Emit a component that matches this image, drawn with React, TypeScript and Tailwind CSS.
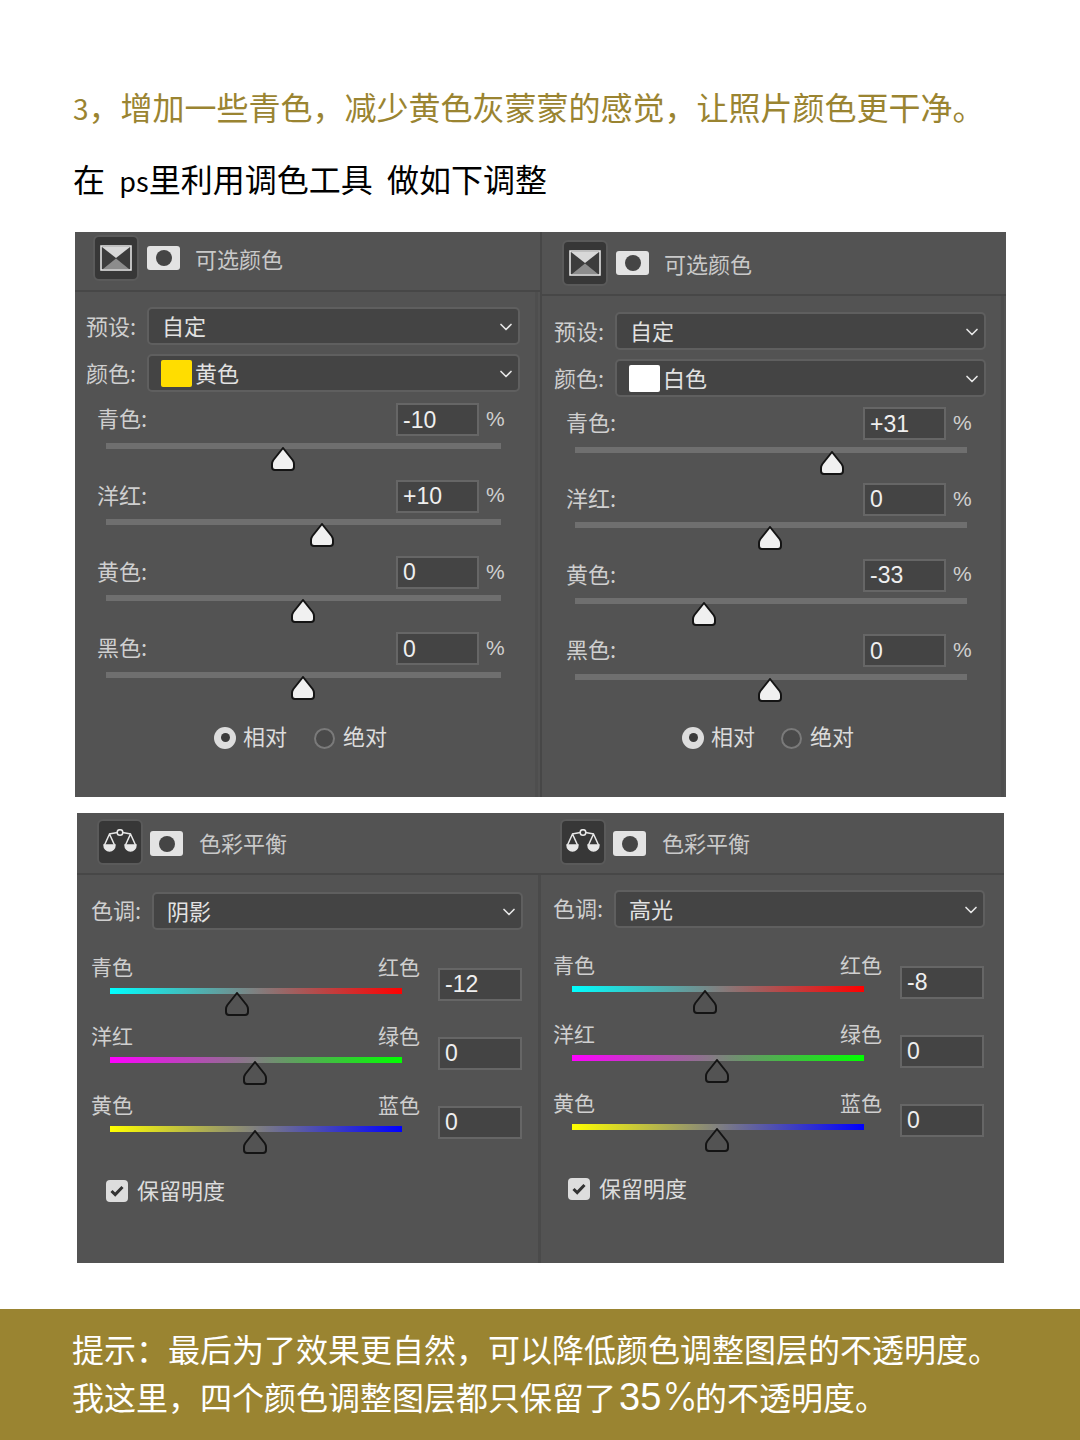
import { ChevronDown } from 'lucide-react';

const cjk = "font-['Noto_Sans_CJK_SC',sans-serif]";

function MaskIcon({ className }: { className: string }) {
    return (
        <div className={`rounded-[3px] bg-[#e3e3e3] flex items-center justify-center ${className}`}>
            <div className="w-[16px] h-[16px] rounded-full bg-[#454545]" />
        </div>
    );
}

function SelectiveIcon() {
    return (
        <div className="w-[46px] h-[46px] rounded-[6px] bg-[#373737] border-2 border-[#5a5a5a] flex items-center justify-center">
            <svg width="32" height="26" viewBox="0 0 32 26">
                <rect x="1" y="1" width="30" height="24" fill="#3c3c3c" stroke="#ececec" strokeWidth="1.5" />
                <path d="M2 2 H30 L16 13 Z" fill="#d8d8d8" />
                <path d="M3 24 L16 13.5 L29 24 Z" fill="#8c8c8c" />
            </svg>
        </div>
    );
}

function BalanceIcon() {
    return (
        <div className="w-[46px] h-[46px] rounded-[6px] bg-[#373737] border-2 border-[#5a5a5a] flex items-center justify-center">
            <svg width="34" height="26" viewBox="0 0 34 26" fill="none" stroke="#e8e8e8" strokeWidth="1.5">
                <circle cx="17" cy="3.5" r="2.8" />
                <path d="M14.5 3.5 L6 5 M19.5 3.5 L28 5" />
                <path d="M6.5 5 L1.5 16 M6.5 5 L11.5 16 M27.5 5 L22.5 16 M27.5 5 L32.5 16" />
                <path d="M1 16 H12 A5.5 6 0 0 1 1 16 Z" fill="#e8e8e8" />
                <path d="M22 16 H33 A5.5 6 0 0 1 22 16 Z" fill="#e8e8e8" />
            </svg>
        </div>
    );
}

function Thumb({ x, solid }: { x: number; solid?: boolean }) {
    return (
        <svg
            className="absolute top-[4px]"
            style={{ left: x - 12 }}
            width="24"
            height="24"
            viewBox="0 0 24 24"
            fill={solid ? '#f0f0f0' : 'none'}
            stroke="#141414"
            strokeWidth="2"
        >
            <path d="M12 1 L21.6 13 Q23 15 23 17 V20 Q23 23 20 23 H4 Q1 23 1 20 V17 Q1 15 2.4 13 Z" strokeLinejoin="round" />
        </svg>
    );
}

function Select({ className, swatch, text }: { className: string; swatch?: string; text: string }) {
    return (
        <div className={`h-[38px] rounded-[5px] bg-[#444444] border-2 border-[#5f5f5f] flex items-center pr-[2px] ${className}`}>
            {swatch ? (
                <div className={`ml-[12px] mr-[3px] w-[31px] h-[27px] rounded-[2px] ${swatch}`} />
            ) : (
                <div className="w-[13px]" />
            )}
            <span className="flex-1 pb-[3px] text-[22px] leading-none text-[#e2e2e2]">{text}</span>
            <ChevronDown size={20} strokeWidth={2} color="#e6e6e6" className="mt-[1px]" />
        </div>
    );
}

function NumberBox({ value, className }: { value: string; className: string }) {
    return (
        <div className={`h-[33px] bg-[#444444] border-2 border-[#666666] flex items-center pl-[5px] font-['Liberation_Sans',sans-serif] text-[23px] text-[#efefef] ${className}`}>
            {value}
        </div>
    );
}

interface SelectiveProps {
    width: string;
    headerPad: string;
    selectPad: string;
    selectWidth: string;
    labelPad: string;
    rowHeight: string;
    rowsTop: string;
    trackClass: string;
    numberWidth: string;
    radioClass: string;
    gapClass: string;
    swatch: string;
    colorName: string;
    rows: { label: string; value: string; x: number }[];
}

function SelectivePanel(p: SelectiveProps) {
    return (
        <div className={`shrink-0 h-full flex flex-col ${p.width}`}>
            <div className={`flex items-start border-b-2 border-[#474747] shrink-0 ${p.headerPad}`}>
                <SelectiveIcon />
                <MaskIcon className="ml-[8px] mt-[11px] w-[33px] h-[24px]" />
                <span className="ml-[15px] mt-[10px] text-[22px] leading-[26px] text-[#c9c9c9]">可选颜色</span>
            </div>
            <div className="flex-1 mr-[2px] border-r-[3px] border-[#4e4e4e]">
                <div className={p.selectPad}>
                    <div className="flex items-center">
                        <span className="w-[61px] pb-[3px] text-[22px] leading-none text-[#cfcfcf]">预设:</span>
                        <Select className={p.selectWidth} text="自定" />
                    </div>
                    <div className="flex items-center mt-[9px]">
                        <span className="w-[61px] pb-[3px] text-[22px] leading-none text-[#cfcfcf]">颜色:</span>
                        <Select className={p.selectWidth} swatch={p.swatch} text={p.colorName} />
                    </div>
                </div>
                <div className={p.rowsTop}>
                    {p.rows.map((row) => (
                        <div key={row.label} className={p.rowHeight}>
                            <div className="flex items-center">
                                <span className={`w-[321px] pb-[5px] text-[22px] leading-none text-[#cfcfcf] ${p.labelPad}`}>{row.label}</span>
                                <NumberBox value={row.value} className={p.numberWidth} />
                                <span className="ml-[7px] pb-[2px] text-[21px] text-[#cfcfcf] font-['Liberation_Sans',sans-serif]">%</span>
                            </div>
                            <div className={`relative h-[6px] mt-[6px] bg-[#6f6f6f] ${p.trackClass}`}>
                                <Thumb x={row.x} solid />
                            </div>
                        </div>
                    ))}
                </div>
                <div className={`flex items-center h-[24px] ${p.radioClass}`}>
                    <div className="w-[22px] h-[22px] rounded-full bg-[#dddddd] flex items-center justify-center">
                        <div className="w-[9px] h-[9px] rounded-full bg-[#3a3a3a]" />
                    </div>
                    <span className="ml-[7px] pb-[5px] text-[22px] leading-none text-[#dcdcdc]">相对</span>
                    <div className={`w-[21px] h-[21px] mt-[1px] rounded-full bg-[#4a4a4a] border-2 border-[#7a7a7a] ${p.gapClass}`} />
                    <span className="ml-[8px] pb-[5px] text-[22px] leading-none text-[#dcdcdc]">绝对</span>
                </div>
            </div>
        </div>
    );
}

interface BalanceRow {
    left: string;
    right: string;
    value: string;
    x: number;
    gradient: string;
}

function BalancePanel({ width, pad, selectTop, selectText, checkPad, rows }: {
    width: string;
    pad: string;
    selectTop: string;
    selectText: string;
    checkPad: string;
    rows: BalanceRow[];
}) {
    return (
        <div className={`shrink-0 h-full ${width} ${pad}`}>
            <div className={`flex items-center ${selectTop}`}>
                <span className="w-[61px] pb-[5px] text-[22px] leading-none text-[#cfcfcf]">色调:</span>
                <Select className="w-[371px]" text={selectText} />
            </div>
            <div className="mt-[26px]">
                {rows.map((row) => (
                    <div key={row.left} className="flex items-start h-[69px]">
                        <div className="w-[329px]">
                            <div className="flex justify-between h-[24px] text-[21px] leading-[20px] text-[#cfcfcf]">
                                <span>{row.left}</span>
                                <span>{row.right}</span>
                            </div>
                            <div className={`relative ml-[19px] mt-[8px] w-[292px] h-[6px] bg-linear-to-r/srgb ${row.gradient}`}>
                                <Thumb x={row.x} />
                            </div>
                        </div>
                        <NumberBox value={row.value} className="ml-[18px] mt-[12px] w-[84px]" />
                    </div>
                ))}
            </div>
            <div className={`flex items-center h-[24px] mt-[16px] ${checkPad}`}>
                <div className="w-[22px] h-[22px] rounded-[4px] bg-[#dddddd] flex items-center justify-center">
                    <svg width="14" height="12" viewBox="0 0 14 12" fill="none" stroke="#333333" strokeWidth="3">
                        <path d="M1.5 6 L5.2 9.6 L12.5 2" />
                    </svg>
                </div>
                <span className="ml-[9px] pb-[5px] text-[22px] leading-none text-[#dcdcdc]">保留明度</span>
            </div>
        </div>
    );
}

const cyanRed = 'from-[#00ffff] via-[#808080] to-[#ff0000]';
const magentaGreen = 'from-[#ff00ff] via-[#808080] to-[#00ff00]';
const yellowBlue = 'from-[#ffff00] via-[#808080] to-[#0000ff]';

export default function App() {
    return (
        <div className={`w-[1080px] h-[1440px] bg-white flex flex-col ${cjk}`}>
            <div className="pt-[70px] pl-[73px] text-[32px] leading-[72px]">
                <p className="h-[72px] text-[#9a8431] whitespace-nowrap"><span className="text-[28px] leading-none">3</span>，增加一些青色，减少黄色灰蒙蒙的感觉，让照片颜色更干净。</p>
                <p className="h-[72px] text-black whitespace-pre">在  <span className="text-[27px] leading-none">ps</span>里利用调色工具  做如下调整</p>
            </div>

            {/* Selective color */}
            <div className="ml-[75px] mt-[18px] w-[931px] h-[565px] bg-[#535353] flex shrink-0">
                <SelectivePanel
                    width="w-[465px]"
                    headerPad="pt-[3px] pl-[18px] h-[60px]"
                    selectPad="pl-[11px] pt-[15px]"
                    selectWidth="w-[373px]"
                    labelPad="pl-[22px]"
                    rowHeight="h-[76.4px]"
                    rowsTop="mt-[11px]"
                    trackClass="ml-[31px] w-[395px]"
                    numberWidth="w-[83px]"
                    radioClass="ml-[139px] mt-[17px]"
                    gapClass="ml-[27px]"
                    swatch="bg-[#ffdd00]"
                    colorName="黄色"
                    rows={[
                        { label: '青色:', value: '-10', x: 177 },
                        { label: '洋红:', value: '+10', x: 216 },
                        { label: '黄色:', value: '0', x: 197 },
                        { label: '黑色:', value: '0', x: 197 },
                    ]}
                />
                <div className="w-[2px] h-full bg-[#474747] shrink-0" />
                <SelectivePanel
                    width="w-[464px]"
                    headerPad="pt-[8px] pl-[20px] h-[64px]"
                    selectPad="pl-[12px] pt-[16px]"
                    selectWidth="w-[371px]"
                    labelPad="pl-[24px]"
                    rowHeight="h-[75.7px]"
                    rowsTop="mt-[10px]"
                    trackClass="ml-[33px] w-[392px]"
                    numberWidth="w-[83px]"
                    radioClass="ml-[140px] mt-[16px]"
                    gapClass="ml-[26px]"
                    swatch="bg-white"
                    colorName="白色"
                    rows={[
                        { label: '青色:', value: '+31', x: 257 },
                        { label: '洋红:', value: '0', x: 195 },
                        { label: '黄色:', value: '-33', x: 129 },
                        { label: '黑色:', value: '0', x: 195 },
                    ]}
                />
            </div>

            {/* Color balance */}
            <div className="ml-[77px] mt-[16px] w-[927px] h-[450px] bg-[#535353] flex flex-col shrink-0">
                <div className="flex items-start h-[62px] border-b-2 border-[#474747] pt-[6px] shrink-0">
                    <div className="w-[483px] pl-[20px] flex items-start shrink-0">
                        <BalanceIcon />
                        <MaskIcon className="ml-[7px] mt-[12px] w-[33px] h-[25px]" />
                        <span className="ml-[16px] mt-[10px] text-[22px] leading-[26px] text-[#c9c9c9]">色彩平衡</span>
                    </div>
                    <div className="flex items-start">
                        <BalanceIcon />
                        <MaskIcon className="ml-[7px] mt-[12px] w-[33px] h-[25px]" />
                        <span className="ml-[16px] mt-[10px] text-[22px] leading-[26px] text-[#c9c9c9]">色彩平衡</span>
                    </div>
                </div>
                <div className="flex flex-1 min-h-0">
                    <BalancePanel
                        width="w-[461px]"
                        pad="pl-[14px]"
                        selectTop="mt-[17px]"
                        selectText="阴影"
                        checkPad="ml-[15px]"
                        rows={[
                            { left: '青色', right: '红色', value: '-12', x: 127, gradient: cyanRed },
                            { left: '洋红', right: '绿色', value: '0', x: 145, gradient: magentaGreen },
                            { left: '黄色', right: '蓝色', value: '0', x: 145, gradient: yellowBlue },
                        ]}
                    />
                    <div className="w-[3px] h-full bg-[#4a4a4a] shrink-0" />
                    <BalancePanel
                        width="w-[463px]"
                        pad="pl-[12px]"
                        selectTop="mt-[15px]"
                        selectText="高光"
                        checkPad="ml-[15px]"
                        rows={[
                            { left: '青色', right: '红色', value: '-8', x: 133, gradient: cyanRed },
                            { left: '洋红', right: '绿色', value: '0', x: 145, gradient: magentaGreen },
                            { left: '黄色', right: '蓝色', value: '0', x: 145, gradient: yellowBlue },
                        ]}
                    />
                </div>
            </div>

            {/* Footer note */}
            <div className="mt-[46px] flex-1 bg-[#9a8431] pt-[15px] pl-[72px] text-[32px] leading-[48px] text-white">
                <p className="h-[48px] whitespace-nowrap">提示：最后为了效果更自然，可以降低颜色调整图层的不透明度。</p>
                <p className="h-[48px] whitespace-nowrap">
                    我这里，四个颜色调整图层都只保留了<span className="ml-[3px] text-[38px] leading-none font-['Liberation_Sans',sans-serif]">35</span><span className="ml-[1px] text-[38px] leading-none font-['Inter',sans-serif] font-light tracking-[-3px]">%</span>的不透明度。
                </p>
            </div>
        </div>
    );
}
